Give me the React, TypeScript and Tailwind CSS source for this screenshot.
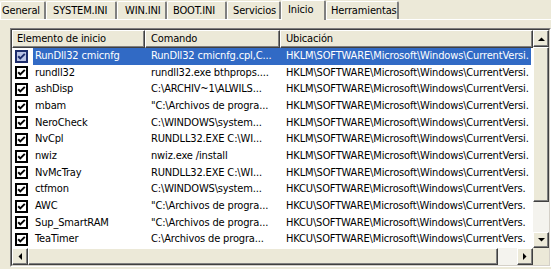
import type { ReactNode } from 'react'

const tabs = [
  { label: 'General', w: 'w-[46px]', pl: 'pl-[1px]' },
  { label: 'SYSTEM.INI', w: 'w-[71px]', pl: 'pl-[6px]' },
  { label: 'WIN.INI', w: 'w-[50px]', pl: 'pl-[7px]' },
  { label: 'BOOT.INI', w: 'w-[60px]', pl: 'pl-[5px]' },
  { label: 'Servicios', w: 'w-[54px]', pl: 'pl-[5px]' },
]

const hklm = 'HKLM\\SOFTWARE\\Microsoft\\Windows\\CurrentVersi.'
const hkcu = 'HKCU\\SOFTWARE\\Microsoft\\Windows\\CurrentVers.'

const rows: { name: string; cmd: string; loc: string }[] = [
  { name: 'RunDll32 cmicnfg', cmd: 'RunDll32 cmicnfg.cpl,C...', loc: hklm },
  { name: 'rundll32', cmd: 'rundll32.exe bthprops....', loc: hklm },
  { name: 'ashDisp', cmd: 'C:\\ARCHIV~1\\ALWILS...', loc: hklm },
  { name: 'mbam', cmd: '"C:\\Archivos de progra...', loc: hklm },
  { name: 'NeroCheck', cmd: 'C:\\WINDOWS\\system...', loc: hklm },
  { name: 'NvCpl', cmd: 'RUNDLL32.EXE C:\\WI...', loc: hklm },
  { name: 'nwiz', cmd: 'nwiz.exe /install', loc: hklm },
  { name: 'NvMcTray', cmd: 'RUNDLL32.EXE C:\\WI...', loc: hklm },
  { name: 'ctfmon', cmd: 'C:\\WINDOWS\\system...', loc: hkcu },
  { name: 'AWC', cmd: '"C:\\Archivos de progra...', loc: hkcu },
  { name: 'Sup_SmartRAM', cmd: '"C:\\Archivos de progra...', loc: hkcu },
  { name: 'TeaTimer', cmd: 'C:\\Archivos de progra...', loc: hkcu },
]

// classic raised 3d box
const raised =
  'border border-t-white border-l-white border-r-[#404040] border-b-[#404040] shadow-[inset_-1px_-1px_0_#808080]'

function Arrow({ dir }: { dir: 'up' | 'down' | 'left' | 'right' }) {
  const pts = {
    up: '0,4 7,4 3.5,0.5',
    down: '0,0 7,0 3.5,3.5',
    left: '4,0 4,7 0.5,3.5',
    right: '0,0 0,7 3.5,3.5',
  }[dir]
  const vertical = dir === 'up' || dir === 'down'
  return (
    <svg width={vertical ? 7 : 4} height={vertical ? 4 : 7} viewBox={vertical ? '0 0 7 4' : '0 0 4 7'}>
      <polygon points={pts} fill="#000" />
    </svg>
  )
}

function ScrollBtn({ dir, className = '' }: { dir: 'up' | 'down' | 'left' | 'right'; className?: string }) {
  return (
    <div className={`flex shrink-0 items-center justify-center bg-[#ece9d8] ${raised} ${className}`}>
      <Arrow dir={dir} />
    </div>
  )
}

function CheckBox({ selected }: { selected: boolean }) {
  const edge = selected ? '#1c2c6c' : '#000'
  return (
    <svg width="13" height="13" viewBox="0 0 13 13" className="shrink-0">
      <rect x="1" y="1" width="11" height="11" fill={selected ? '#b9c3e6' : '#fff'} stroke={edge} strokeWidth="2" />
      <polyline points="3.2,6.2 5.3,8.4 9.8,3.9" fill="none" stroke={edge} strokeWidth="2" />
    </svg>
  )
}

function HeaderCell({ children, className }: { children: ReactNode; className: string }) {
  return (
    <div className={`flex h-full shrink-0 items-center bg-[#ece9d8] ${raised} ${className}`}>{children}</div>
  )
}

export default function App() {
  return (
    <div className="h-[269px] w-[551px] overflow-hidden bg-[#ece9d8] text-[11px] tracking-[-0.15px] text-black [font-family:'DejaVu_Sans_Condensed','DejaVu_Sans',sans-serif] [font-stretch:condensed]">
      {/* tab strip */}
      <div className="relative z-10 flex h-[20px] items-end">
        {tabs.map((t) => (
          <div
            key={t.label}
            className={`flex h-[18px] shrink-0 items-start border-l border-t border-r-2 border-l-white border-t-white border-r-[#808080] pt-[1px] ${t.w} ${t.pl} mb-[1px] rounded-t-[2px]`}
          >
            {t.label}
          </div>
        ))}
        <div className="flex h-[20px] w-[45px] shrink-0 items-start rounded-t-[2px] border-l border-t border-r-2 border-l-white border-t-white border-r-[#808080] bg-[#ece9d8] pl-[6px] pt-[1px]">
          Inicio
        </div>
        <div className="mb-[1px] flex h-[18px] w-[73px] shrink-0 items-start rounded-t-[2px] border-l border-t border-r-2 border-l-white border-t-white border-r-[#808080] pl-[4px] pt-[1px]">
          Herramientas
        </div>
      </div>

      {/* panel */}
      <div className="-mt-px border-t border-white pl-[10px] pt-[8px]">
        {/* list view */}
        <div className="w-[541px] border border-t-[#808080] border-l-[#808080] border-r-white border-b-white">
          <div className="border border-t-[#404040] border-l-[#404040] border-r-[#d4d0c8] border-b-[#d4d0c8] bg-white">
            <div className="flex">
              {/* content */}
              <div className="w-[521px]">
                <div className="flex h-[18px]">
                  <HeaderCell className="w-[133px] pl-[4px]">Elemento de inicio</HeaderCell>
                  <HeaderCell className="w-[135px] pl-[5px]">Comando</HeaderCell>
                  <HeaderCell className="w-[253px] pl-[5px]">Ubicación</HeaderCell>
                </div>
                {rows.map((r, i) => {
                  const sel = i === 0
                  return (
                    <div key={r.name} className="flex h-[16.67px] items-center whitespace-nowrap">
                      <div className="flex w-[21px] shrink-0 items-center pl-[3px]">
                        <CheckBox selected={sel} />
                      </div>
                      <div className={`flex h-full w-[498px] items-center ${sel ? 'bg-[#316ac5] text-white' : ''}`}>
                        <div className="w-[112px] shrink-0 overflow-hidden pl-[2px]">{r.name}</div>
                        <div className="w-[135px] shrink-0 overflow-hidden pl-[6px]">{r.cmd}</div>
                        <div className="w-[251px] shrink-0 overflow-hidden pl-[6px]">{r.loc}</div>
                      </div>
                    </div>
                  )
                })}
              </div>
              {/* vertical scrollbar */}
              <div className="flex h-[218px] w-[16px] flex-col bg-[#f4f3ee]">
                <ScrollBtn dir="up" className="h-[17px]" />
                <div className={`h-[155px] bg-[#ece9d8] ${raised}`} />
                <div className="flex-1" />
                <ScrollBtn dir="down" className="h-[16px]" />
              </div>
            </div>
            {/* horizontal scrollbar */}
            <div className="flex h-[17px] bg-[#f4f3ee]">
              <ScrollBtn dir="left" className="w-[16px]" />
              <div className={`w-[470px] bg-[#ece9d8] ${raised}`} />
              <div className="w-[19px]" />
              <ScrollBtn dir="right" className="w-[16px]" />
              <div className="w-[16px] bg-[#ece9d8]" />
            </div>
          </div>
        </div>
      </div>
    </div>
  )
}
